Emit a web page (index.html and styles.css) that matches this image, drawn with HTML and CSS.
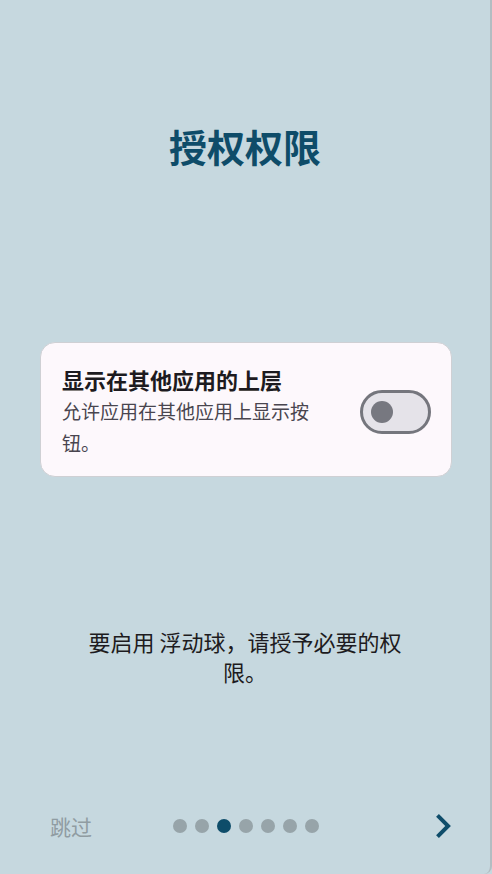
FILE: index.html
```html
<!DOCTYPE html>
<html lang="zh-CN">
<head>
<meta charset="utf-8">
<title>授权权限</title>
<link rel="stylesheet" href="styles.css">
</head>
<body>
<div class="screen">
  <h1 class="title">授权权限</h1>

  <div class="card">
    <div class="card-text">
      <div class="card-title">显示在其他应用的上层</div>
      <div class="card-sub">允许应用在其他应用上显示按钮。</div>
    </div>
    <div class="switch"><span class="knob"></span></div>
  </div>

  <p class="hint">要启用 浮动球，请授予必要的权限。</p>

  <div class="bottom">
    <span class="skip">跳过</span>
    <div class="dots">
      <span class="dot"></span>
      <span class="dot"></span>
      <span class="dot active"></span>
      <span class="dot"></span>
      <span class="dot"></span>
      <span class="dot"></span>
      <span class="dot"></span>
    </div>
    <svg class="next" viewBox="8.59 6 7.41 12" width="15" height="24" aria-hidden="true">
      <path d="M10 6L8.59 7.41 13.17 12l-4.58 4.59L10 18l6-6z" fill="currentColor"/>
    </svg>
  </div>
</div>
</body>
</html>
```
FILE: styles.css
```css
html, body {
  margin: 0;
  padding: 0;
}

body {
  background: #c6d8df;
  font-family: "Noto Sans CJK SC", "Noto Sans", Roboto, sans-serif;
  color: #1d1b20;
}

.screen {
  box-sizing: border-box;
  height: 874px;
  display: flex;
  flex-direction: column;
  border-right: 2px solid #b3bdc2;
  border-bottom-right-radius: 8px;
}

.title {
  margin: 120px 0 0;
  font-size: 38px;
  line-height: 52px;
  font-weight: 700;
  text-align: center;
  color: #0e4c69;
}

.card {
  margin: 170px 38px 0 40px;
  box-sizing: border-box;
  height: 135px;
  background: #fdf8fc;
  border: 1px solid #cfd0d4;
  border-radius: 15px;
  padding: 22px 20px 16px 21px;
  display: flex;
  align-items: center;
}

.card-text {
  width: 256px;
  align-self: flex-start;
}

.card-title {
  font-size: 22px;
  line-height: 28px;
  font-weight: 700;
  color: #1d1b20;
  margin-bottom: 2px;
}

.card-sub {
  font-size: 19px;
  line-height: 32px;
  color: #49454f;
}

.switch {
  margin-left: auto;
  box-sizing: border-box;
  width: 71px;
  height: 44px;
  border: 3px solid #75767d;
  border-radius: 22px;
  background: #e5e3e9;
  display: flex;
  align-items: center;
  padding-left: 8px;
  margin-top: -1px;
}

.knob {
  width: 22px;
  height: 22px;
  border-radius: 50%;
  background: #777880;
}

.hint {
  margin: 149px 80px 0;
  font-size: 22px;
  line-height: 30px;
  text-align: center;
  color: #1d1b20;
}

.bottom {
  margin-top: auto;
  margin-bottom: 20px;
  height: 56px;
  display: grid;
  grid-template-columns: 1fr auto 1fr;
  align-items: center;
  padding: 0 48px 0 50px;
}

.skip {
  font-size: 21px;
  line-height: 28px;
  color: #909ca2;
}

.dots {
  display: flex;
  gap: 8px;
}

.dot {
  width: 14px;
  height: 14px;
  border-radius: 50%;
  background: #97a4a9;
}

.dot.active {
  background: #0e4d6a;
}

.next {
  justify-self: end;
  margin-right: -9px;
  color: #0e4d6a;
}
```
